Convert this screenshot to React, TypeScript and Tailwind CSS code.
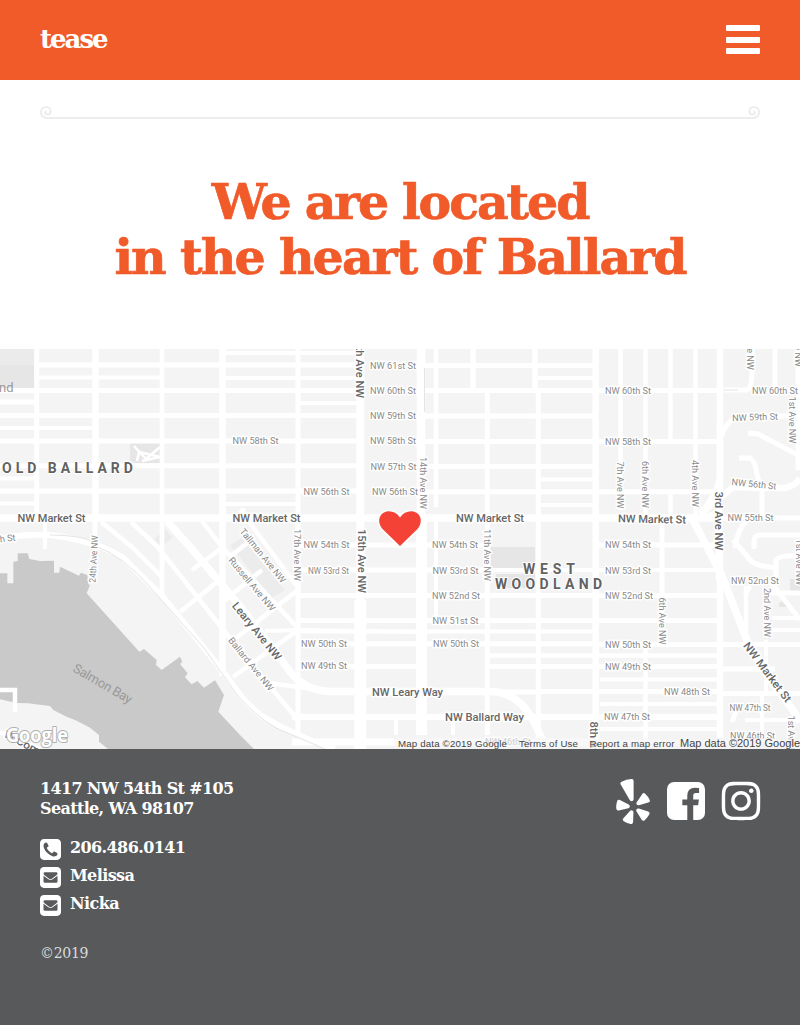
import React from "react";
import { FaInstagram, FaYelp } from "react-icons/fa";

const slab = "font-['DejaVu_Serif',serif] font-bold";

// [y, x1, x2, width]
const streets: number[][] = [
  [353, 222, 360, 4], [365, 36, 360, 5], [377.5, 36, 162, 4], [378, 222, 360, 4], [390.5, 0, 360, 5],
  [402, 0, 36, 5], [403, 298, 360, 4], [415.5, 0, 360, 5], [428, 0, 95, 4], [441, 0, 360, 5],
  [465.7, 0, 360, 5], [478.5, 0, 36, 4], [491, 0, 360, 5], [503.5, 0, 36, 4], [504, 222, 298, 4],
  [518, 0, 720, 7.5], [365.5, 421, 535, 5], [390.5, 421, 720, 5], [416, 421, 595, 5], [441.5, 421, 720, 5],
  [466.5, 421, 595, 5], [491.7, 421, 720, 5], [365.5, 535, 595, 5], [378, 538, 595, 4], [479.5, 538, 595, 4],
  [505, 538, 595, 4], [545, 298, 487, 5], [545, 595, 720, 5], [570, 298, 487, 5], [570, 487, 720, 4],
  [595.5, 298, 720, 5], [620.5, 298, 720, 5], [631.5, 298, 595, 4], [643.7, 298, 595, 5], [644.5, 595, 800, 5],
  [655.5, 487, 720, 4.5], [666.5, 298, 421, 5], [666.5, 487, 720, 5], [669, 720, 775, 5], [679.5, 600, 720, 4],
  [691.5, 538, 720, 5], [693.5, 720, 800, 5], [704, 600, 720, 4], [717, 292, 720, 6], [729, 600, 720, 4],
  [742, 292, 600, 7], [518, 720, 800, 5], [742, 600, 800, 4], [720, 745, 800, 4], [593, 770, 800, 5],
  [618, 772, 800, 4], [630, 772, 800, 4],
];

// [x, y1, y2, width]
const avenues: number[][] = [
  [36.7, 349, 520, 5], [95.5, 349, 518, 6.5], [95, 518, 545, 5], [162, 349, 597, 4.7], [222.5, 349, 676, 6.5],
  [298, 349, 734, 5], [360.3, 349, 749, 8], [360.3, 600, 749, 12], [421, 349, 560, 8.5], [421.5, 518, 735, 11],
  [436, 349, 507, 4.5], [436, 518, 620, 4], [473, 349, 390, 5.5], [487.3, 390, 735, 5], [535, 349, 390, 5.5],
  [538.3, 390, 749, 5], [595.7, 349, 749, 6.5], [620.5, 349, 510, 4.5], [645.5, 349, 518, 4.5],
  [670.5, 349, 441, 4.5], [670.5, 491, 518, 4.5], [695.5, 349, 518, 4.5], [720, 349, 500, 6.5], [720, 545, 738, 6.5],
  [662, 518, 645, 5], [645.5, 647, 740, 4.5], [775, 349, 390, 5], [396, 717, 735, 4], [453, 717, 735, 4],
  [45, 518, 549, 4], [766, 640, 693, 4], [762, 693, 738, 4], [746, 586, 642, 4.5], [798, 349, 470, 5],
];

type Label = [string, number, number, number, number?];
// [text, centre x, centre y, width, rotation]
const minor: Label[] = [
  ["NW 61st St", 393, 365.5, 46], ["NW 60th St", 393, 390.5, 46], ["NW 59th St", 393, 416, 46],
  ["NW 58th St", 393, 441, 46], ["NW 57th St", 393.5, 466.5, 46], ["NW 56th St", 395, 491.7, 46],
  ["NW 58th St", 255.5, 441, 46], ["NW 56th St", 326.5, 491.7, 46], ["NW 54th St", 326.5, 545, 46],
  ["NW 53rd St", 328.5, 570.5, 41], ["NW 50th St", 324, 643.5, 46], ["NW 49th St", 324, 666, 46],
  ["NW 54th St", 455, 545, 46], ["NW 53rd St", 455.5, 570.5, 46], ["NW 52nd St", 456, 595.5, 48],
  ["NW 51st St", 455.5, 620.5, 46], ["NW 50th St", 456, 643.7, 46], ["NW 60th St", 628, 391, 46],
  ["NW 58th St", 628, 441.7, 46], ["NW 54th St", 628, 545, 46], ["NW 53rd St", 628, 570.5, 46],
  ["NW 52nd St", 629, 595.5, 48], ["NW 50th St", 628, 645, 46], ["NW 49th St", 628, 667, 46],
  ["NW 48th St", 687, 692, 46], ["NW 47th St", 627, 717, 46], ["NW 47th St", 750, 708, 41],
  ["NW 52nd St", 755, 581, 48], ["NW 55th St", 750.5, 518, 46], ["NW 59th St", 755, 417, 46, -2],
  ["NW 60th St", 775, 391, 46], ["NW 56th St", 754, 484, 45, 6], ["NW 46th St", 752.5, 736, 45],
  ["NW 46th St", 508, 742, 46],
  ["14th Ave NW", 423.5, 483, 52, 90], ["11th Ave NW", 487, 555, 52, 90], ["17th Ave NW", 297, 555, 52, 90],
  ["24th Ave NW", 93.5, 559, 47, -87], ["7th Ave NW", 620.5, 485, 47, 90], ["6th Ave NW", 645.5, 484.5, 47, 90],
  ["4th Ave NW", 695.5, 483.5, 47, 90], ["6th Ave NW", 662, 621, 47, 90], ["2nd Ave NW", 767.5, 612.5, 49, 90],
  ["1st Ave NW", 792, 420, 47, 90], ["Tallman Ave NW", 263, 555.5, 67, 51], ["Russell Ave NW", 252, 584, 67, 50],
  ["Ballard Ave NW", 251, 664, 66, 51], ["Ave NW", 750.5, 354, 32, 90], ["Ave NW", 798, 351, 32, 90],
  ["1st Ave NW", 791, 739, 47, 90], ["1st Ave NW", 799, 562, 47, 90], ["54th St", 1, 539, 29, -7],
];
const major: Label[] = [
  ["NW Market St", 51.5, 518.5, 68], ["NW Market St", 266.5, 518, 68], ["NW Market St", 490, 518.5, 68],
  ["NW Market St", 652, 519, 68, 1], ["NW Leary Way", 407.5, 692, 71], ["NW Ballard Way", 484.5, 717, 79],
  ["15th Ave NW", 362, 561, 64, 90], ["15th Ave NW", 360, 366, 64, 90], ["3rd Ave NW", 718.5, 521, 59, 90],
  ["Leary Ave NW", 257, 631, 71, 51], ["NW Market St", 767.5, 672, 72, 53], ["8th Ave NW", 594, 751, 59, 90],
  ["W Commodore Way", 52, 758, 106, 28],
];

function MapText({ items, className, size }: { items: Label[]; className: string; size: number }) {
  return (
    <g className={className} fontSize={size} textAnchor="middle">
      {items.map(([text, x, y, w, r], i) => (
        <text key={i} x={x} y={y + size * 0.36} textLength={w} lengthAdjust="spacingAndGlyphs" transform={r ? `rotate(${r} ${x} ${y})` : undefined}>
          {text}
        </text>
      ))}
    </g>
  );
}

function BallardMap() {
  return (
    <svg viewBox="0 349 800 400" className="block h-[400px] w-full bg-[#f4f4f4] font-['Roboto',sans-serif]">
      <g fill="#e6e6e6">
        <path d="M0 349H34V388H0z" fill="#ebebeb" />
        <path d="M0 365H34V388H0z" />
        <path d="M130 443H160V463H134L130 460z" />
        <path d="M491 547H535V571H491zM496 574H535V588H496z" />
        <path d="M153 541L164 529L173 537L160 548zM230 545L242 538L285 590L272 598z" fill="#ececec" />
        <path d="M779 603L788 599V607H779z" />
        <path d="M790 579H800V592H790z" />
      </g>
      <path
        transform="translate(0 545) scale(.33333)"
        fill="#c9c9c9"
        d="M0 85H22V115H40V50L53 48V25H83L88 42L120 48L162 47V83H178L180 65L237 92L243 83L262 90L265 118L270 120L260 145L418 320L432 312L470 345L468 360L485 375L540 335L547 350L540 357L563 385L555 397L575 418L592 408L612 428L645 406L672 450L655 500L720 570L765 615H328L297 590V570L270 548L230 527L200 515L160 495L150 483L125 480L85 475L50 474L0 463z"
      />
      <g stroke="#fff" fill="none">
        {streets.map(([y, x1, x2, w], i) => (
          <path key={`s${i}`} d={`M${x1} ${y}H${x2}`} strokeWidth={w} />
        ))}
        {avenues.map(([x, y1, y2, w], i) => (
          <path key={`a${i}`} d={`M${x} ${y1}V${y2}`} strokeWidth={w} />
        ))}
        <path d="M0 539Q40 530 78 540Q104 546 122 557L163 597L222 670L238 692Q252 712 275 724" strokeWidth="6" />
        <path d="M265 718Q300 738 335 749" strokeWidth="6" />
        <path d="M101 522L132 547L163 578" strokeWidth="4.5" />
        <path d="M131 522L157 546L233 642L298 720" strokeWidth="4.5" />
        <path d="M167 521L190 547L240 606L286 666Q302 691 330 691.5H490Q517 691.5 533 720L545 745" strokeWidth="7.5" />
        <path d="M202 521L222 547L298 628M240 510L300 590" strokeWidth="4.5" />
        <path d="M180 612L217 582M192 570L222 548M233 677L298 630M236 638L298 590M225 600L262 570M232 555L255 537M262 682L320 690M243 508V522" strokeWidth="4.5" />
        <path d="M265 631L300 630L422 632" strokeWidth="4" />
        <path d="M505 692H540" strokeWidth="5" />
        <path d="M0 690H15V712M0 732L40 749" strokeWidth="4.5" />
        <path d="M692 518L722 576L747 640L770 680L793 710L800 722" strokeWidth="7.5" />
        <path d="M720 425V475Q719 494 700 514M700 514L733 487Q770 488 785 488Q797 485 800 478M719 495V580" strokeWidth="6.5" />
        <path d="M724 390H747Q752 388 752 370V349" strokeWidth="5" />
        <path d="M722 435Q727 418 745 416H800M748 433L758 434L800 456M739 458H750Q756 462 757 475L762 490V518" strokeWidth="5" />
        <path d="M735 548Q738 525 751 518M754 549V540Q755 535 760 535H800M700 518L720 512M733 540L752 562Q763 568 776 567V560Q780 555 800 556M776 567V578" strokeWidth="5" />
        <path d="M770 581L800 620M736 711L732 722M745 595L750 586" strokeWidth="5" />
        <path d="M134 446L146 459L160 447M137 461L139 452L160 457L142 461" strokeWidth="2.5" />
      </g>
      <path d="M95 546Q122 555 150 587L204 648L238 696Q252 713 276 728L325 749M424.5 368V412M724 390H738M50 535Q80 535 94 542" fill="none" stroke="#ddd" strokeWidth=".8" />
      <g stroke="#fff" strokeWidth="3" strokeLinejoin="round">
        <MapText items={minor} size={9.3} className="fill-[#8a8a8a] [paint-order:stroke]" />
        <MapText items={major} size={11} className="fill-[#666666] font-medium [paint-order:stroke]" />
      </g>
      <g fill="#626262" className="font-bold [paint-order:stroke]" fontSize="14" stroke="#fff" strokeWidth="2">
        <text x="2" y="473" textLength="134" letterSpacing="3.1">OLD BALLARD</text>
        <text x="523" y="573.5" textLength="52">WEST</text>
        <text x="495" y="588.5" textLength="107">WOODLAND</text>
      </g>
      <text x="-1" y="391.5" fontSize="13" fill="#999">nd</text>
      <text x="72" y="671" fontSize="13" fill="#999" textLength="66" transform="rotate(30 72 671)">Salmon Bay</text>
      <path
        d="M400 546L382.5 529C377.5 523.5 378.5 515.5 383.5 512.8C389 509.8 396 511.5 400 517.5C404 511.5 411 509.8 416.5 512.8C421.5 515.5 422.5 523.5 417.5 529z"
        fill="#f44336"
        stroke="#fff"
        strokeWidth="3"
        className="[paint-order:stroke]"
      />
      <text x="6" y="742" fontSize="20" fill="#fff" stroke="#b0b0b0" strokeWidth="2" strokeLinejoin="round" textLength="62" lengthAdjust="spacingAndGlyphs" className="font-['Open_Sans',sans-serif] font-bold [paint-order:stroke]">Google</text>
      <path d="M394 738H800V749H394z" fill="#f5f5f5" opacity=".65" />
      <g fill="#444" fontSize="9.7" className="font-['Liberation_Sans',sans-serif]">
        <text x="398" y="747" textLength="109">Map data ©2019 Google</text>
        <text x="519" y="747" textLength="59">Terms of Use</text>
        <text x="589.5" y="747" textLength="85">Report a map error</text>
        <text x="680" y="747" fontSize="11" textLength="120">Map data ©2019 Google</text>
      </g>
    </svg>
  );
}

function Curl({ className = "" }: { className?: string }) {
  return (
    <svg viewBox="0 0 16 14" className={`h-[14px] w-4 shrink-0 ${className}`} fill="none" stroke="#ededed" strokeWidth="2">
      <path d="M16 12H7C3.4 12 1 9.6 1 6.3C1 3.1 3.2 1.1 6 1.1C8.9 1.1 10.9 3 10.7 5.7C10.5 8.2 7.8 9.2 6 8.2C4.6 7.3 4.6 5.6 6.4 5.4" />
    </svg>
  );
}

const SQUARE =
  "M1536 416v960q0 119-84.5 203.5t-203.5 84.5h-960q-119 0-203.5-84.5t-84.5-203.5v-960q0-119 84.5-203.5t203.5-84.5h960q119 0 203.5 84.5t84.5 203.5z";

function PhoneIcon() {
  return (
    <svg viewBox="0 128 1536 1536" className="h-[21px] w-[21px] shrink-0" fill="#fff">
      <path d="M1280 1193q0-11-2-16-3-8-38.5-29.5t-88.5-49.5l-53-29q-5-3-19-13t-25-15-21-5q-18 0-47 32.5t-57 65.5-44 33q-7 0-16.5-3.5t-15.5-6.5-17-9.5-14-8.5q-99-55-170.5-126.5t-126.5-170.5q-2-3-8.5-14t-9.5-17-6.5-15.5-3.5-16.5q0-13 20.5-33.5t45-38.5 45-39.5 20.5-36.5q0-10-5-21t-15-25-13-19q-3-6-15-28.5t-25-45.5-26.5-47.5-25-40.5-16.5-18-16-2q-48 0-101 22-46 21-80 94.5t-34 130.5q0 16 2.5 34t5 30.5 9 33 10 29.5 12.5 33 11 30q60 164 216.5 320.5t320.5 216.5q6 2 30 11t33 12.5 29.5 10 33 9 30.5 5 34 2.5q57 0 130.5-34t94.5-80q22-53 22-101zm256-777v960q0 119-84.5 203.5t-203.5 84.5h-960q-119 0-203.5-84.5t-84.5-203.5v-960q0-119 84.5-203.5t203.5-84.5h960q119 0 203.5 84.5t84.5 203.5z" />
    </svg>
  );
}

function MailIcon() {
  return (
    <svg viewBox="0 128 1536 1536" className="h-[21px] w-[21px] shrink-0" fill="#fff">
      <path d={SQUARE} />
      <path fill="#58595b" d="M256 770L560 990Q690 1085 768 1085T976 990L1280 770V1184Q1280 1280 1184 1280H352Q256 1280 256 1184z" />
      <path fill="#58595b" d="M256 608Q256 512 352 512H1184Q1280 512 1280 608Q1280 680 1200 738L940 925Q820 1015 768 1015T596 925L336 738Q256 680 256 608z" />
    </svg>
  );
}

export default function App() {
  return (
    <div className="flex min-h-[1025px] w-full flex-col bg-white">
      <header className="flex h-20 items-center justify-between bg-[#f15a29] px-10 pb-0.5 text-white">
        <a className={`${slab} text-[26px] leading-none tracking-[-2px]`}>tease</a>
        <button aria-label="Menu" className="mt-0.5 mb-px flex h-[29px] w-[34px] flex-col justify-between">
          <span className="h-1.5 w-full rounded-[1px] bg-white" />
          <span className="h-1.5 w-full rounded-[1px] bg-white" />
          <span className="h-1.5 w-full rounded-[1px] bg-white" />
        </button>
      </header>
      <main>
        <div className="flex px-10 pt-[26px]">
          <Curl />
          <div className="h-[13px] flex-1 border-b-2 border-[#ededed]" />
          <Curl className="-scale-x-100" />
        </div>
        <h1 className={`${slab} mt-[55px] h-[174px] text-center text-[49px] leading-[55px] text-[#f15a29] [-webkit-text-stroke:0.7px_#f15a29]`}>
          <span className="block tracking-[-2.1px]">We are located</span>
          <span className="block tracking-[-1.9px]">in the heart of Ballard</span>
        </h1>
        <BallardMap />
      </main>
      <footer className={`${slab} flex flex-1 justify-between bg-[#58595b] px-10 pt-[29px] text-base text-white`}>
        <div>
          <address className="pt-px not-italic leading-5">
            <p className="tracking-[-0.65px]">1417 NW 54th St #105</p>
            <p className="tracking-[-0.65px]">Seattle, WA 98107</p>
          </address>
          <ul className="mt-4 leading-7">
            <li className="flex h-7 items-center gap-[9px]"><PhoneIcon /><span className="-mt-0.5 tracking-[-0.6px]">206.486.0141</span></li>
            <li className="flex h-7 items-center gap-[9px]"><MailIcon /><span className="-mt-0.5 tracking-[-0.6px]">Melissa</span></li>
            <li className="flex h-7 items-center gap-[9px]"><MailIcon /><span className="-mt-0.5 tracking-[-0.6px]">Nicka</span></li>
          </ul>
          <p className="mt-6 text-sm font-normal leading-5 tracking-[-0.3px] text-[#dcdcdc]">©2019</p>
        </div>
        <div className="flex h-[46px] items-center gap-[17px]">
          <FaYelp className="h-[45px] w-[34px]" />
          <svg viewBox="128 128 1536 1536" className="h-[38px] w-[38px]" fill="#fff">
            <path d="M1376 128q119 0 203.5 84.5t84.5 203.5v960q0 119-84.5 203.5t-203.5 84.5h-188v-595h199l30-232h-229v-148q0-56 23.5-84t91.5-28l122-1v-207q-63-9-178-9-136 0-217.5 80t-81.5 226v171h-200v232h200v595h-532q-119 0-203.5-84.5t-84.5-203.5v-960q0-119 84.5-203.5t203.5-84.5h960z" />
          </svg>
          <FaInstagram className="-mr-[3px] h-[44px] w-[44px] -ml-[3px]" />
        </div>
      </footer>
    </div>
  );
}
